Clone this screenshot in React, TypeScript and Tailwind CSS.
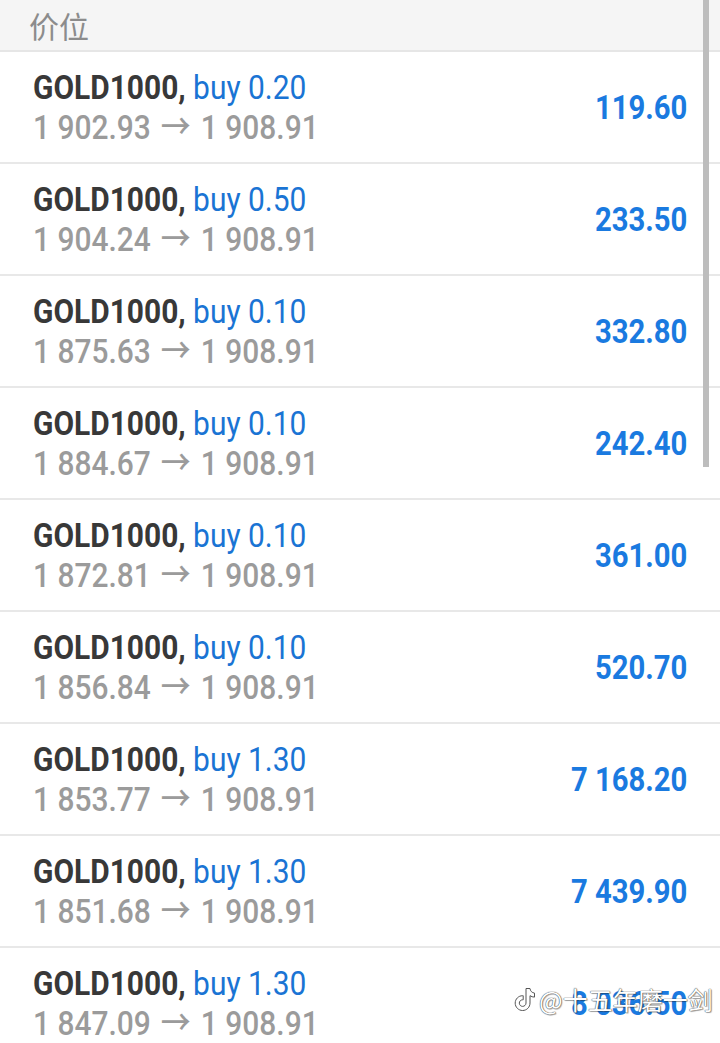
import React from 'react';

interface Position {
  symbol: string;
  volume: string;
  open: string;
  current: string;
  profit: string;
}

// позиции в списке
const positions: Position[] = [
  { symbol: 'GOLD1000', volume: '0.20', open: '1 902.93', current: '1 908.91', profit: '119.60' },
  { symbol: 'GOLD1000', volume: '0.50', open: '1 904.24', current: '1 908.91', profit: '233.50' },
  { symbol: 'GOLD1000', volume: '0.10', open: '1 875.63', current: '1 908.91', profit: '332.80' },
  { symbol: 'GOLD1000', volume: '0.10', open: '1 884.67', current: '1 908.91', profit: '242.40' },
  { symbol: 'GOLD1000', volume: '0.10', open: '1 872.81', current: '1 908.91', profit: '361.00' },
  { symbol: 'GOLD1000', volume: '0.10', open: '1 856.84', current: '1 908.91', profit: '520.70' },
  { symbol: 'GOLD1000', volume: '1.30', open: '1 853.77', current: '1 908.91', profit: '7 168.20' },
  { symbol: 'GOLD1000', volume: '1.30', open: '1 851.68', current: '1 908.91', profit: '7 439.90' },
  { symbol: 'GOLD1000', volume: '1.30', open: '1 847.09', current: '1 908.91', profit: '8 036.50' },
];

const PositionRow: React.FC<{ item: Position }> = ({ item }) => (
  <div className="h-[112px] shrink-0 border-b-2 border-[#e8e8e8] flex items-center justify-between pl-[33px] pr-[33px]">
    <div className="flex flex-col text-[34px] leading-[40px]">
      <div className="whitespace-nowrap origin-left scale-x-[0.88]">
        <span className="font-bold text-[#383838]">{item.symbol},</span>{' '}
        <span className="text-[#1a74d4]">buy {item.volume}</span>
      </div>
      <div className="whitespace-nowrap origin-left scale-x-[0.88] font-medium text-[#9b9b9b]">
        {item.open} <span className="mx-[3px]">→</span> {item.current}
      </div>
    </div>
    <div className="whitespace-nowrap origin-right scale-x-[0.86] text-[34px] leading-[40px] font-bold text-[#1a7ae0]">
      {item.profit}
    </div>
  </div>
);

const TikTokMark: React.FC = () => (
  <svg width="22" height="27" viewBox="0 0 22 26" className="shrink-0">
    <path
      d="M12 2h4c.3 2.6 2 4.3 4.5 4.6v4c-1.7 0-3.2-.5-4.5-1.4v7.3c0 4.2-3.3 7.5-7.4 7.5S1.2 20.7 1.2 16.6 4.5 9.2 8.6 9.2h.6v4.1h-.6c-1.8 0-3.3 1.5-3.3 3.3s1.5 3.3 3.3 3.3 3.4-1.5 3.4-3.3V2z"
      fill="#fff"
      stroke="#555"
      strokeWidth="1"
    />
  </svg>
);

export default function App() {
  return (
    <div className="relative w-[720px] h-[1043px] overflow-hidden bg-white flex flex-col font-['Roboto','Noto_Sans_CJK_SC',sans-serif]">
      <div className="h-[52px] shrink-0 bg-[#f5f5f5] border-b-2 border-[#e6e6e6] flex items-center pl-[29px] text-[30px] text-[#8c8c8c] font-['Noto_Sans_CJK_SC',sans-serif]">
        价位
      </div>

      {positions.map((p, i) => (
        <PositionRow key={i} item={p} />
      ))}

      {/* полоса прокрутки */}
      <div className="absolute top-0 right-[11px] w-[6px] h-[467px] bg-[#bdbdbd]" />

      {/* водяной знак */}
      <div className="absolute left-[514px] top-[984px] flex items-center gap-[3px] text-[25px] leading-[30px] text-white font-['Noto_Sans_CJK_SC',sans-serif] [text-shadow:0_0_1px_#444,0_0_1px_#444,1px_1px_1px_rgba(0,0,0,0.3)]">
        <TikTokMark />
        <span>@十五年磨一剑</span>
      </div>
    </div>
  );
}
